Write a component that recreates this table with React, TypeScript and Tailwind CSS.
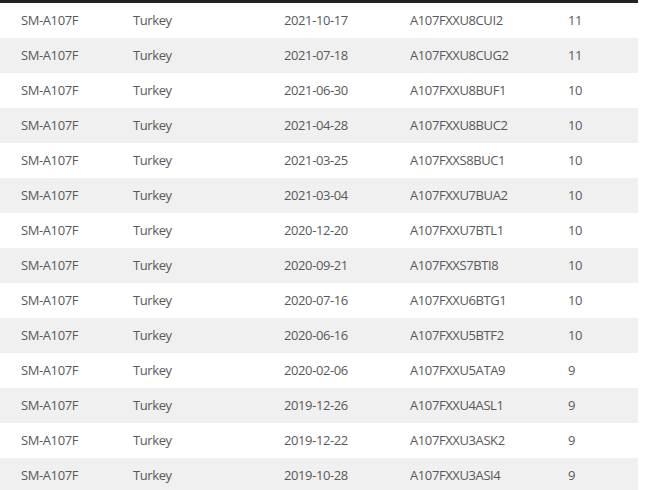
const rows = [
  ["2021-10-17", "A107FXXU8CUI2", "11"],
  ["2021-07-18", "A107FXXU8CUG2", "11"],
  ["2021-06-30", "A107FXXU8BUF1", "10"],
  ["2021-04-28", "A107FXXU8BUC2", "10"],
  ["2021-03-25", "A107FXXS8BUC1", "10"],
  ["2021-03-04", "A107FXXU7BUA2", "10"],
  ["2020-12-20", "A107FXXU7BTL1", "10"],
  ["2020-09-21", "A107FXXS7BTI8", "10"],
  ["2020-07-16", "A107FXXU6BTG1", "10"],
  ["2020-06-16", "A107FXXU5BTF2", "10"],
  ["2020-02-06", "A107FXXU5ATA9", "9"],
  ["2019-12-26", "A107FXXU4ASL1", "9"],
  ["2019-12-22", "A107FXXU3ASK2", "9"],
  ["2019-10-28", "A107FXXU3ASI4", "9"],
];

export default function App() {
  return (
    <div className="w-[647px] h-[490px] overflow-hidden bg-white font-['Open_Sans',sans-serif] text-[13px] tracking-[-0.4px] text-[#595959]">
      <div className="w-[638px]">
        <div className="h-[3px] bg-[#222]" />
        {rows.map(([date, fw, os], i) => (
          <div
            key={fw}
            className={`flex items-center h-[35px] ${i % 2 === 1 ? "bg-[#f0f0f0]" : "bg-white"}`}
          >
            <div className="w-[133px] pl-[21px]">SM-A107F</div>
            <div className="w-[151px]">Turkey</div>
            <div className="w-[126px]">{date}</div>
            <div className="w-[158px]">{fw}</div>
            <div>{os}</div>
          </div>
        ))}
      </div>
    </div>
  );
}
